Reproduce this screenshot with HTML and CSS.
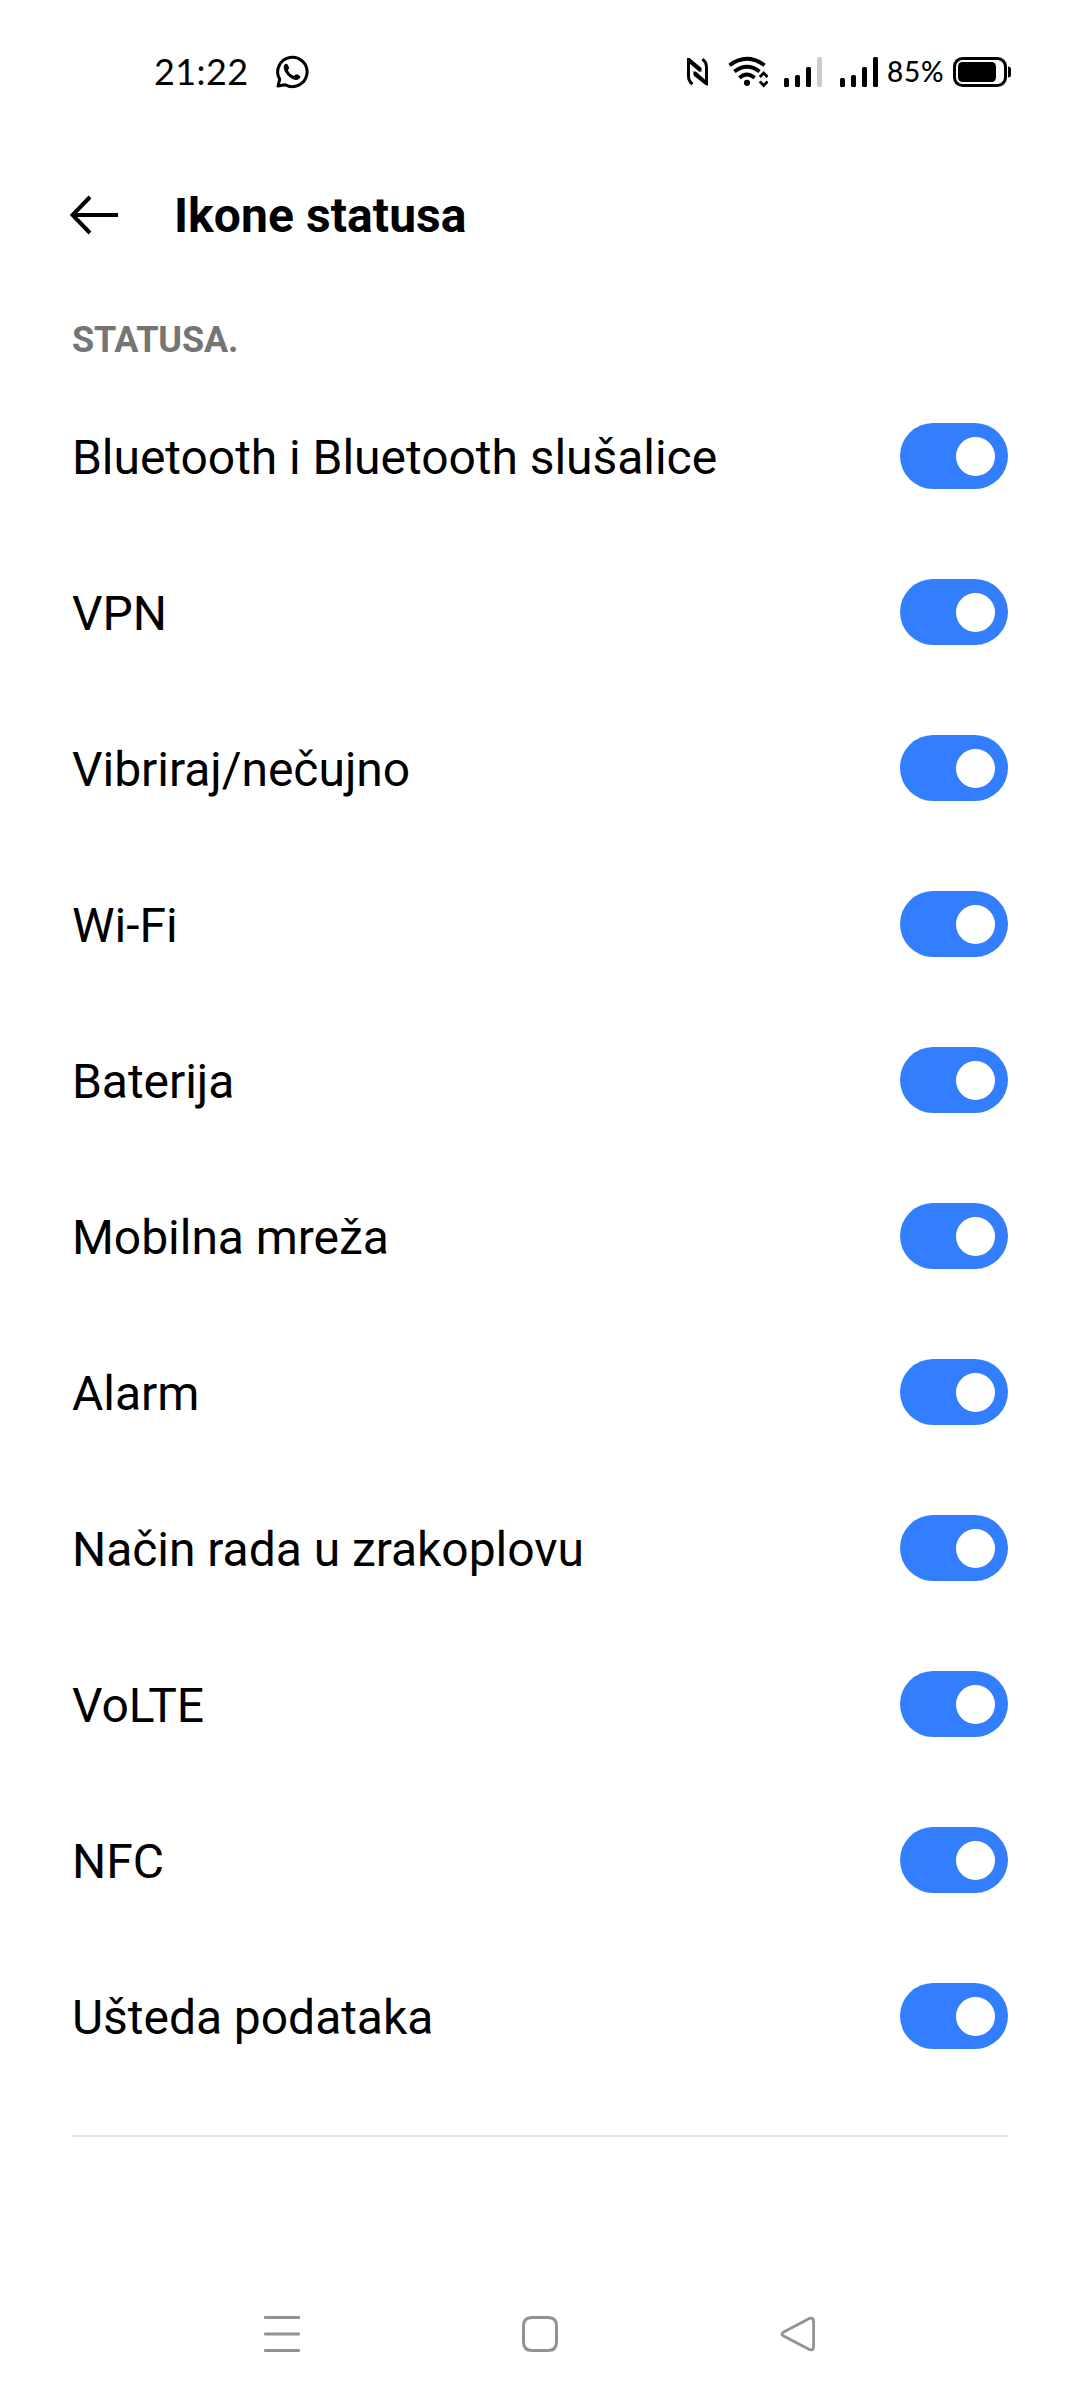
FILE: index.html
```html
<!DOCTYPE html>
<html lang="hr">
<head>
<meta charset="utf-8">
<title>Ikone statusa</title>
<link rel="stylesheet" href="styles.css">
</head>
<body>
<div class="screen">
  <div class="status-bar">
    <div class="status-left">
      <span class="clock">21:22</span>
      <svg class="whatsapp" width="34" height="34" viewBox="0 0 34 34">
        <path d="M4.700 24.300A14.700 14.700 0 1 1 10.200 29.700L3 31Z" fill="none" stroke="#000" stroke-width="3" stroke-linejoin="round"/>
        <path d="M8.700 11.800C8.700 9.800 10.300 8.800 11.500 8.800C12.700 8.800 14 12.200 14.100 13C14.100 14 12.700 14.700 13 15.500C14.200 18 16.300 19.800 18.800 20.800C19.800 21 20.400 19.200 21.600 19.200C22.500 19.300 25.300 20.800 25.400 21.600C25.400 23.800 22.800 25.100 20.900 25C15.200 24.200 8.500 17.800 8.700 11.800Z"/>
      </svg>
    </div>
    <div class="status-right">
      <svg class="nfc" width="22" height="28" viewBox="0 0 22 28" fill="none" stroke="#000" stroke-width="3">
        <path d="M5.600 26Q1.500 23.500 1.500 18V2.500L13.500 12.800M15.400 1.300Q19.500 4 19.500 9.500V24.800L7.500 14.500"/>
        <path d="M0 0H2.500L14.500 10V14L12 12.500ZM21 27H18.500L6.500 17.500V13L9 14.500Z" fill="#000" stroke="none"/>
      </svg>
      <svg class="wifi" width="40" height="32" viewBox="0 0 40 32" fill="none" stroke="#000" stroke-width="3.800">
        <path d="M1.500 9.300Q19 -3.700 36.500 9.300M6.400 15.600Q19 6 31.600 15.600M11.400 21.900Q19 15.300 26.600 21.900"/>
        <circle cx="19" cy="26.800" r="3.100" fill="#000" stroke="none"/>
        <path d="M31.800 21L35.700 17L39.600 21M31.800 25.500L35.700 29.500L39.600 25.500" stroke-width="2.700"/>
      </svg>
      <svg class="signal" width="38" height="30" viewBox="0 0 38 30">
        <rect y="21" width="5" height="9" rx="1.500"/><rect x="11" y="18" width="5" height="12" rx="1.500"/><rect x="22" y="10" width="5" height="20" rx="1.500"/><rect x="33" width="5" height="30" rx="1.500" fill="#ccc"/>
      </svg>
      <svg class="signal" width="38" height="30" viewBox="0 0 38 30">
        <rect y="21" width="5" height="9" rx="1.500"/><rect x="11" y="18" width="5" height="12" rx="1.500"/><rect x="22" y="10" width="5" height="20" rx="1.500"/><rect x="33" width="5" height="30" rx="1.500"/>
      </svg>
      <span class="percent">85%</span>
      <svg class="battery" width="58" height="30" viewBox="0 0 58 30">
        <rect x="1.500" y="1.500" width="51" height="27" rx="8" fill="none" stroke="#000" stroke-width="3"/>
        <rect x="5" y="5" width="38" height="20" rx="4.500"/>
        <path d="M55 9.500Q58 10 58 12V18Q58 20 55 20.500Z"/>
      </svg>
    </div>
  </div>

  <header class="header">
    <svg class="back" width="48" height="40" viewBox="0 0 48 40" fill="none" stroke="#000" stroke-width="4">
      <path d="M48 20H3M20 2L2.500 20L20 38"/>
    </svg>
    <h1 class="title">Ikone statusa</h1>
  </header>

  <main class="content">
    <h2 class="section">STATUSA.</h2>
    <ul class="list">
      <li class="row"><span class="label">Bluetooth i Bluetooth slušalice</span><span class="toggle"></span></li>
      <li class="row"><span class="label">VPN</span><span class="toggle"></span></li>
      <li class="row"><span class="label">Vibriraj/nečujno</span><span class="toggle"></span></li>
      <li class="row"><span class="label">Wi-Fi</span><span class="toggle"></span></li>
      <li class="row"><span class="label">Baterija</span><span class="toggle"></span></li>
      <li class="row"><span class="label">Mobilna mreža</span><span class="toggle"></span></li>
      <li class="row"><span class="label">Alarm</span><span class="toggle"></span></li>
      <li class="row"><span class="label">Način rada u zrakoplovu</span><span class="toggle"></span></li>
      <li class="row"><span class="label">VoLTE</span><span class="toggle"></span></li>
      <li class="row"><span class="label">NFC</span><span class="toggle"></span></li>
      <li class="row"><span class="label">Ušteda podataka</span><span class="toggle"></span></li>
    </ul>
  </main>

  <nav class="nav">
    <svg width="36" height="36" viewBox="0 0 36 36" fill="#929292"><rect width="36" height="3" rx="1"/><rect y="16.500" width="36" height="3" rx="1"/><rect y="33" width="36" height="3" rx="1"/></svg>
    <svg width="36" height="36" viewBox="0 0 36 36" fill="none" stroke="#929292" stroke-width="3"><path d="M10 1.500H26Q34.500 1.500 34.500 10V26Q34.500 34.500 26 34.500H10Q1.500 34.500 1.500 26V10Q1.500 1.500 10 1.500Z"/></svg>
    <svg width="36" height="36" viewBox="0 0 36 36" fill="none" stroke="#929292" stroke-width="2.800"><path d="M3.200 16.300L29.300 2.500Q33.600 1 33.600 5.500V30.500Q33.600 35 29.300 33.500L3.200 19.700Q.600 18 3.200 16.300Z"/></svg>
  </nav>
</div>
</body>
</html>
```
FILE: styles.css
```css
* { box-sizing: border-box; }
body { margin: 0; background: #fff; color: #000; font-family: Roboto, sans-serif; }
svg { display: block; flex: none; }
.screen { display: flex; flex-direction: column; width: 1080px; height: 2400px; }

.status-bar { display: flex; justify-content: space-between; align-items: center; height: 144px; padding: 0 69px 0 154px; }
.status-left, .status-right { display: flex; align-items: center; }
.clock { font: 36px/44px Lato, sans-serif; letter-spacing: 0.4px; width: 95px; padding-bottom: 2px; white-space: nowrap; }
.whatsapp { margin-left: 26px; }
.wifi { margin-left: 19px; }
.signal { margin-left: 16px; }
.signal + .signal { margin-left: 18px; }
.percent { width: 56px; margin-left: 9px; padding-bottom: 2px; font: 500 28px/34px Lato, sans-serif; letter-spacing: 0.8px; white-space: nowrap; }
.battery { margin-left: 10px; }

.header { display: flex; align-items: center; gap: 56px; height: 144px; padding: 0 70px; }
.back { margin-bottom: 2px; }
.title { margin: 0; font-size: 48px; font-weight: 700; line-height: 56px; letter-spacing: 0.08px; }

.content { padding: 0 72px; }
.section { display: flex; align-items: center; margin: 0; height: 90px; padding-top: 14px; font-size: 36px; font-weight: 700; line-height: 42px; letter-spacing: -0.15px; color: #757575; }
.list { margin: 0; padding: 0 0 41px; list-style: none; border-bottom: 2px solid #e5e5e5; }
.row { display: flex; align-items: center; justify-content: space-between; height: 156px; }
.label { padding-top: 4px; font-size: 48px; line-height: 56px; letter-spacing: -0.04px; }
.toggle { display: flex; align-items: center; justify-content: flex-end; width: 108px; height: 66px; padding-right: 13px; border-radius: 33px; background: #337eff; }
.toggle::before { content: ""; width: 39px; height: 39px; border-radius: 50%; background: #fff; }

.nav { display: flex; justify-content: space-between; align-items: center; height: 132px; margin-top: auto; padding: 0 264px; }
```
